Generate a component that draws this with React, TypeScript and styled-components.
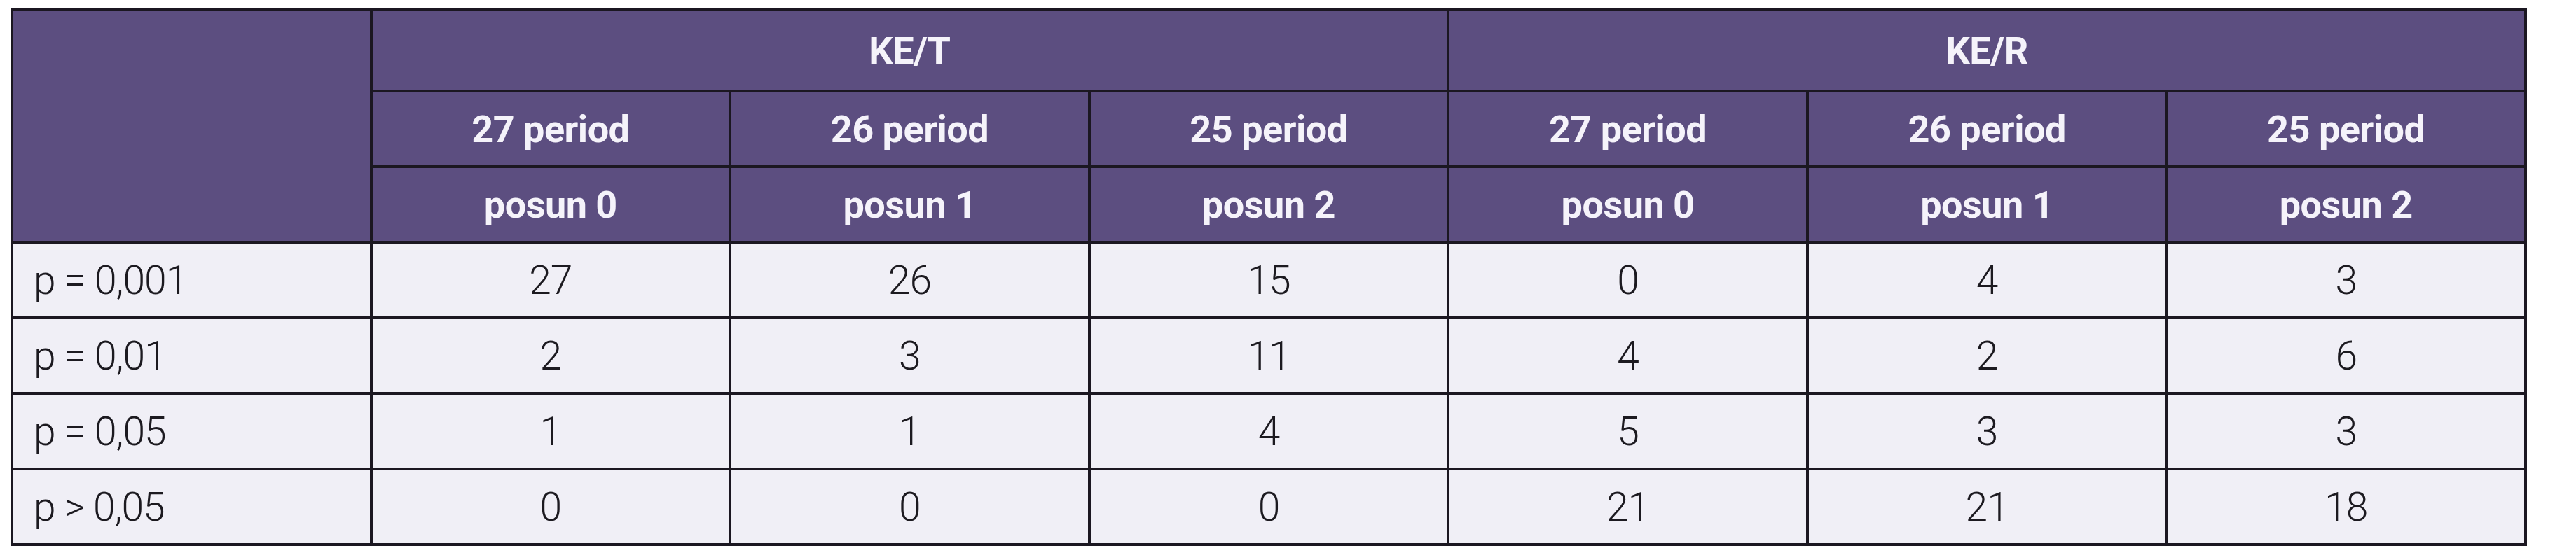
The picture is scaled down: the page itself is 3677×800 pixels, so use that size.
import React from "react";
import styled, { createGlobalStyle } from "styled-components";

const Global = createGlobalStyle`
  html, body { margin: 0; padding: 0; background: #ffffff; }
  body { font-family: Roboto, "Liberation Sans", Arial, sans-serif; }
`;

const Page = styled.div`
  padding: 12px 0 0 15px;
`;

const Grid = styled.div`
  box-sizing: border-box;
  width: 3592px;
  display: grid;
  grid-template-columns: repeat(7, 1fr);
  grid-template-rows: 112px repeat(6, 104px);
  gap: 4px;
  padding: 4px;
  background: #1b1721;
`;

const HeadCell = styled.div<{ $span?: number; $rows?: number }>`
  grid-column: span ${(p) => p.$span ?? 1};
  grid-row: span ${(p) => p.$rows ?? 1};
  background: #5c4e80;
  color: #f5f3fa;
  font-family: Roboto, "Liberation Sans", Arial, sans-serif;
  font-weight: 700;
  font-size: 54px;
  letter-spacing: -0.5px;
  display: flex;
  align-items: center;
  justify-content: center;
  white-space: nowrap;
`;

const DataCell = styled.div<{ $label?: boolean }>`
  background: #f0eff6;
  color: #1c1a20;
  font-family: Roboto, "Liberation Sans", Arial, sans-serif;
  font-weight: 300;
  font-size: 57px;
  letter-spacing: -1px;
  display: flex;
  align-items: center;
  justify-content: ${(p) => (p.$label ? "flex-start" : "center")};
  padding-left: ${(p) => (p.$label ? "29px" : "0")};
  white-space: nowrap;
`;

const subHeads = ["27 period", "26 period", "25 period"];
const shifts = ["posun 0", "posun 1", "posun 2"];

const rows: { label: string; values: string[] }[] = [
  { label: "p = 0,001", values: ["27", "26", "15", "0", "4", "3"] },
  { label: "p = 0,01", values: ["2", "3", "11", "4", "2", "6"] },
  { label: "p = 0,05", values: ["1", "1", "4", "5", "3", "3"] },
  { label: "p > 0,05", values: ["0", "0", "0", "21", "21", "18"] },
];

export default function App() {
  return (
    <>
      <Global />
      <Page>
        <Grid>
          <HeadCell $rows={3} />
          <HeadCell $span={3}>KE/T</HeadCell>
          <HeadCell $span={3}>KE/R</HeadCell>
          {[...subHeads, ...subHeads].map((t, i) => (
            <HeadCell key={"s" + i}>{t}</HeadCell>
          ))}
          {[...shifts, ...shifts].map((t, i) => (
            <HeadCell key={"p" + i}>{t}</HeadCell>
          ))}
          {rows.map((r) => (
            <React.Fragment key={r.label}>
              <DataCell $label>{r.label}</DataCell>
              {r.values.map((v, i) => (
                <DataCell key={i}>{v}</DataCell>
              ))}
            </React.Fragment>
          ))}
        </Grid>
      </Page>
    </>
  );
}
